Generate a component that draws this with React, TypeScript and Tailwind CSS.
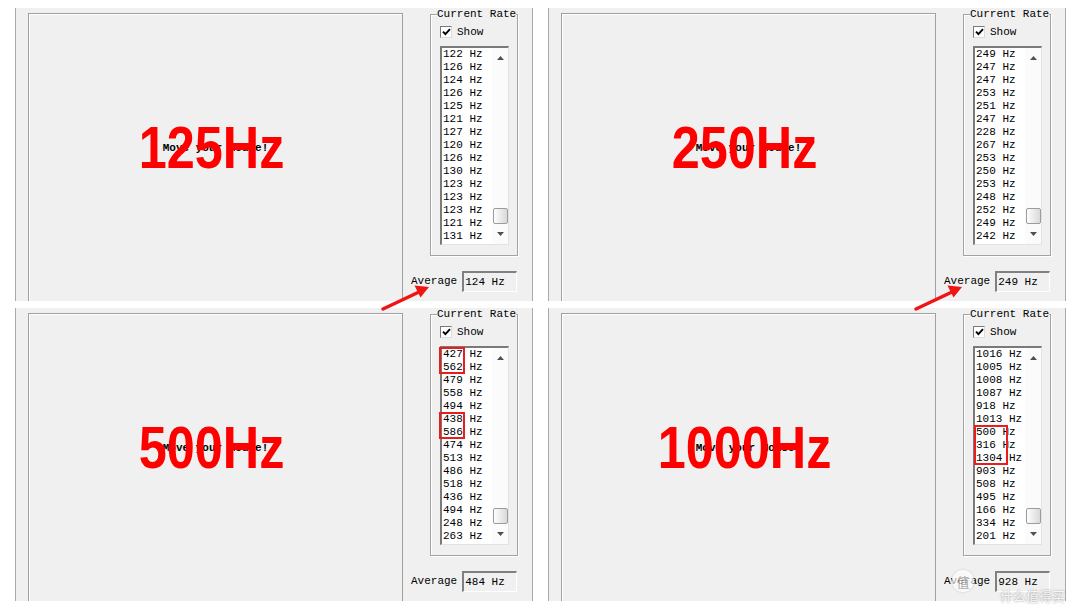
import React from "react";

type Mark = { row: number; span: number; left: number; width: number };

type Capture = {
  label: string;
  rates: number[];
  avg: string;
  marks: Mark[];
};

const CAPTURES: Capture[] = [
  {
    label: "125Hz",
    rates: [122, 126, 124, 126, 125, 121, 127, 120, 126, 130, 123, 123, 123, 121, 131],
    avg: "124 Hz",
    marks: [],
  },
  {
    label: "250Hz",
    rates: [249, 247, 247, 253, 251, 247, 228, 267, 253, 250, 253, 248, 252, 249, 242],
    avg: "249 Hz",
    marks: [],
  },
  {
    label: "500Hz",
    rates: [427, 562, 479, 558, 494, 438, 586, 474, 513, 486, 518, 436, 494, 248, 263],
    avg: "484 Hz",
    marks: [
      { row: 0, span: 2, left: -3, width: 26 },
      { row: 5, span: 2, left: -3, width: 26 },
    ],
  },
  {
    label: "1000Hz",
    rates: [1016, 1005, 1008, 1087, 918, 1013, 500, 316, 1304, 903, 508, 495, 166, 334, 201],
    avg: "928 Hz",
    marks: [{ row: 6, span: 3, left: -1, width: 34 }],
  },
];

function CheckBox() {
  return (
    <div className="flex h-[12px] w-[12px] items-center justify-center border border-t-[#7a7a7a] border-l-[#7a7a7a] border-r-[#dcdcdc] border-b-[#dcdcdc] bg-white">
      <svg width="9" height="8" viewBox="0 0 9 8">
        <path d="M1 3.6 L3.4 6.2 L8 1.2" stroke="#000" strokeWidth="1.9" fill="none" />
      </svg>
    </div>
  );
}

function ScrollBar() {
  return (
    <div className="flex w-[16px] flex-col bg-[#fbfbfb]">
      <div className="flex h-[20px] items-center justify-center">
        <svg width="7" height="4" viewBox="0 0 7 4">
          <path d="M3.5 0 L7 4 L0 4 Z" fill="#505050" />
        </svg>
      </div>
      <div className="flex flex-1 flex-col items-center justify-end">
        <div className="h-[16px] w-[15px] rounded-[2px] border border-[#9c9c9c] bg-linear-to-r from-[#fdfdfd] to-[#d9d9d9]" />
      </div>
      <div className="flex h-[20px] items-center justify-center">
        <svg width="7" height="4" viewBox="0 0 7 4">
          <path d="M0 0 L7 0 L3.5 4 Z" fill="#505050" />
        </svg>
      </div>
    </div>
  );
}

function RateList({ rates, marks }: { rates: number[]; marks: Mark[] }) {
  return (
    <div className="relative ml-[9px] mt-[8px] flex h-[199px] w-[69px] border-t-2 border-l-2 border-r border-b border-t-[#7a7a7a] border-l-[#7a7a7a] border-r-[#e2e2e2] border-b-[#e2e2e2] bg-white">
      <ul className="flex-1 overflow-hidden pl-[1px]">
        {rates.map((r, i) => (
          <li key={i} className="h-[13px] whitespace-pre leading-[13px] text-black">
            {`${r} Hz`}
          </li>
        ))}
      </ul>
      <ScrollBar />
      {marks.map((m, i) => (
        <div
          key={i}
          className="absolute border-2 border-[#ea1c1c]"
          style={{ left: m.left, top: m.row * 13 - 1, width: m.width, height: m.span * 13 + 1 }}
        />
      ))}
    </div>
  );
}

function Panel({ capture }: { capture: Capture }) {
  return (
    <div className="relative flex h-[293px] w-[518px] overflow-hidden border-x border-[#a9a9a9] bg-[#f0f0f0] font-['Liberation_Mono','DejaVu_Sans_Mono',monospace] text-[11px]">
      {/* drawing area of the test window */}
      <div className="relative ml-[12px] mt-[5px] flex w-[375px] shrink-0 flex-col items-center border-t border-l border-r border-[#a0a0a0] pt-[128px] shadow-[inset_1px_1px_0_#ffffff]">
        <span className="font-bold leading-[13px] text-black">Move your Mouse!</span>
        <span className="absolute left-0 right-[8px] top-[104px] scale-x-[0.84] text-center font-['Liberation_Sans',Arial,sans-serif] text-[60px] leading-[60px] font-bold text-[#ff0000]">
          {capture.label}
        </span>
      </div>

      {/* right-hand controls */}
      <div className="flex flex-col items-start">
        <fieldset className="ml-[27px] h-[248px] w-[88px] border border-[#a3a3a3] shadow-[1px_1px_0_#ffffff,inset_1px_1px_0_#ffffff]">
          <legend className="ml-[6px] whitespace-nowrap bg-[#f0f0f0] px-0 leading-[12px] text-black">Current Rate</legend>
          <div className="ml-[9px] mt-[6px] flex items-center gap-[5px] leading-[12px] text-black">
            <CheckBox />
            <span>Show</span>
          </div>
          <RateList rates={capture.rates} marks={capture.marks} />
        </fieldset>

        <div className="ml-[8px] mt-[15px] flex items-center gap-[5px] text-black">
          <span>Average</span>
          <div className="flex h-[21px] w-[55px] items-center border-t-2 border-l-2 border-r border-b border-t-[#808080] border-l-[#808080] border-r-[#ffffff] border-b-[#ffffff] bg-[#f0f0f0] pl-[1px]">
            {capture.avg}
          </div>
        </div>
      </div>
    </div>
  );
}

function Arrow({ dx }: { dx: number }) {
  return (
    <g transform={`translate(${dx} 0)`}>
      <line x1="383" y1="309" x2="419" y2="292" stroke="#f01414" strokeWidth="3.5" strokeLinecap="round" />
      <polygon points="429,287 420.5,297.5 414.5,285.5" fill="#f01414" />
    </g>
  );
}

export default function App() {
  return (
    <div className="relative h-[608px] w-[1080px] overflow-hidden bg-white">
      <div className="grid grid-cols-[518px_518px] gap-x-[15px] gap-y-[7px] pl-[15px] pt-[8px]">
        {CAPTURES.map((c) => (
          <Panel key={c.label} capture={c} />
        ))}
      </div>

      {/* callout arrows pointing at the averages */}
      <svg className="pointer-events-none absolute left-0 top-0" width="1080" height="608">
        <Arrow dx={0} />
        <Arrow dx={533} />
      </svg>

      {/* site watermark */}
      <div className="pointer-events-none absolute left-[952px] top-[570px] flex items-center gap-[4px] opacity-80">
        <div className="flex h-[22px] w-[22px] items-center justify-center rounded-full bg-white/80 font-['Noto_Sans_CJK_SC',sans-serif] text-[13px] leading-none text-[#9a9a9a] shadow-[0_0_2px_rgba(0,0,0,0.25)]">
          值
        </div>
      </div>
      <div className="pointer-events-none absolute left-[1000px] top-[588px] font-['Noto_Sans_CJK_SC',sans-serif] text-[13px] leading-[16px] text-white/90 [text-shadow:0_0_2px_rgba(0,0,0,0.45)]">
        什么值得买
      </div>
    </div>
  );
}
